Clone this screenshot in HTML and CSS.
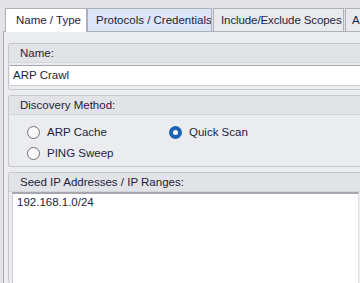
FILE: index.html
```html
<!DOCTYPE html>
<html lang="en">
<head>
  <meta charset="UTF-8">
  <title>Discovery - Name / Type</title>
  <link rel="stylesheet" href="styles.css">
</head>
<body>

  <div class="window">
    <div class="tabs">
      <div class="tab active">Name / Type</div>
      <div class="tab hover">Protocols / Credentials</div>
      <div class="tab scopes">Include/Exclude Scopes</div>
      <div class="tab last">A</div>
    </div>

    <div class="panel">
      <div class="group">
        <div class="group-title">Name:</div>
        <div class="group-body name-body">
          <div class="textbox">ARP Crawl</div>
        </div>
      </div>

      <div class="group">
        <div class="group-title">Discovery Method:</div>
        <div class="group-body radios">
          <label class="radio"><span class="dot"></span>ARP Cache</label>
          <label class="radio checked"><span class="dot"></span>Quick Scan</label>
          <label class="radio"><span class="dot"></span>PING Sweep</label>
        </div>
      </div>

      <div class="group seed">
        <div class="group-title">Seed IP Addresses / IP Ranges:</div>
        <div class="memo">192.168.1.0/24</div>
      </div>
    </div>
  </div>

</body>
</html>
```

FILE: styles.css
```css
body {
  margin: 0;
  width: 360px;
  height: 283px;
  overflow: hidden;
  background: #e4e4e8;
  font-family: 'Liberation Sans', Arial, sans-serif;
  font-size: 11.5px;
  color: #1e1e3c;
}

.window {
  padding-top: 8px;
  height: 275px;
  display: flex;
  flex-direction: column;
}

.tabs {
  display: flex;
  margin-left: 5px;
  height: 23px;
  white-space: nowrap;
}

.tab {
  flex: none;
  box-sizing: border-box;
  height: 23px;
  line-height: 22px;
  padding: 0 0 0 9px;
  background: #e9eaee;
  border: 1px solid #b0b1b8;
  border-bottom: none;
  margin-right: 1px;
  overflow: hidden;
}

.tab.active {
  width: 82px;
  margin-right: 0;
  padding-left: 10px;
  background: #fff;
  height: 24px;
  position: relative;
  z-index: 1;
}

.tab.hover {
  width: 125px;
  padding-left: 8px;
  background: #dce6f8;
}

.tab.scopes {
  width: 131px;
  padding-left: 7px;
  letter-spacing: -0.1px;
}

.tab.last {
  width: 20px;
  padding-left: 6px;
}

.panel {
  flex: 1;
  margin-left: 3px;
  border-left: 1px solid #a9aab0;
  border-top: 1px solid #b0b1b8;
  background: #ebecef;
  padding: 11px 0 0 4px;
  display: flex;
  flex-direction: column;
  gap: 5px;
}

.group {
  border: 1px solid #c6c7cc;
  border-right: none;
  border-radius: 3px 0 0 3px;
  background: #ebecef;
}

.group-title {
  height: 18px;
  line-height: 18px;
  padding-left: 11px;
  background: #e2e3e7;
  border-bottom: 1px solid #d4d5da;
}

.name-body {
  padding: 2px 0 3px 1px;
}

.textbox {
  height: 19px;
  line-height: 19px;
  padding-left: 3px;
  background: #fff;
  border-top: 1px solid #a4a6ae;
  border-bottom: 1px solid #c9cacf;
}

.radios {
  display: grid;
  grid-template-columns: 142px 1fr;
  grid-auto-rows: 17px;
  row-gap: 4px;
  padding: 9px 0 4px 18px;
}

.radio {
  display: flex;
  align-items: center;
  gap: 7px;
  height: 17px;
  line-height: 17px;
}

.dot {
  width: 11px;
  height: 11px;
  border: 1px solid #6f7078;
  border-radius: 50%;
  background: #fafafa;
  box-sizing: content-box;
}

.radio.checked .dot {
  width: 5px;
  height: 5px;
  border: 4px solid #1c63b5;
  background: #fff;
}

.seed {
  flex: 1;
  display: flex;
  flex-direction: column;
  border-bottom: none;
}

.memo {
  flex: 1;
  margin: 0 1px 0 3px;
  padding: 2px 4px;
  background: #fff;
  border-top: 2px solid #a5a6ae;
  border-left: 1px solid #c9cacf;
  border-right: 1px solid #e3e4e8;
}
```
